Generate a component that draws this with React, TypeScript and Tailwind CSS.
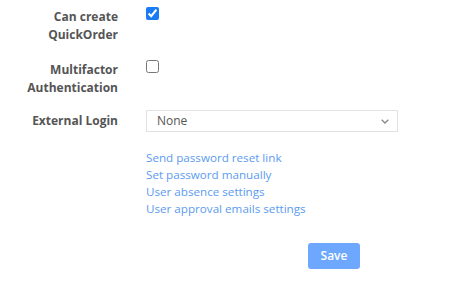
const App = (): JSX.Element => {
	return (
		<div className="w-[453px] h-[306px] bg-white font-['Open_Sans',sans-serif] text-[12px]">
			<div className="grid grid-cols-[118px_1fr] gap-x-[28px] pt-[8px]">
				<label className="text-right font-bold text-[#555] leading-[18px]">
					Can create
					<br />
					QuickOrder
				</label>
				<div>
					<input type="checkbox" defaultChecked className="w-[13px] h-[13px] m-0 -mt-[1px] block accent-[#1a7cf5]" />
				</div>

				<label className="mt-[17px] text-right font-bold text-[#555] leading-[18px]">
					Multifactor
					<br />
					Authentication
				</label>
				<div className="mt-[16px]">
					<input type="checkbox" className="w-[13px] h-[13px] m-0 block" />
				</div>

				<label className="mt-[13px] text-right font-bold text-[#555] leading-[22px]">External Login</label>
				<div className="mt-[13px] w-[252px] h-[22px] border border-[#e2e2e2] flex items-center justify-between pl-[10px] pr-[8px] text-[#555]">
					<span>None</span>
					<svg width="8" height="5" viewBox="0 0 8 5" fill="none">
						<path d="M0.7 0.7L4 4L7.3 0.7" stroke="#888" strokeWidth="1.3" />
					</svg>
				</div>

				<div />
				<div className="mt-[17px] flex flex-col leading-[17px] text-[11.65px] text-[#5b9bf0]">
					<a>Send password reset link</a>
					<a>Set password manually</a>
					<a>User absence settings</a>
					<a>User approval emails settings</a>
				</div>
			</div>
			<div className="flex justify-start pl-[308px] mt-[26px]">
				<button className="w-[52px] h-[26px] rounded-[3px] bg-[#6ea8fe] text-white font-semibold text-[12px]">Save</button>
			</div>
		</div>
	);
};

export default App;
